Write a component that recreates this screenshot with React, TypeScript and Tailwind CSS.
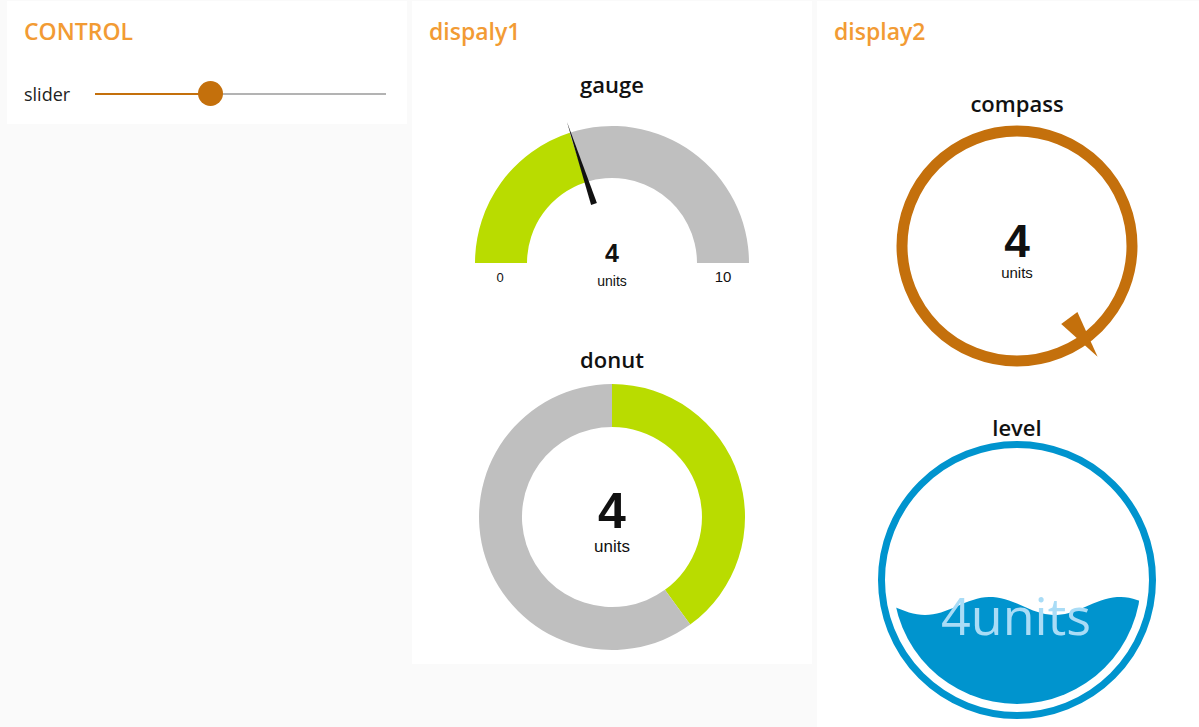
import React from "react";

const sans = "font-['Open_Sans','Noto_Sans',sans-serif]";
const arial = "font-['Liberation_Sans',Arial,sans-serif]";

// wave top edge for the level widget, svg coords
const wavePath = (() => {
  let d = "";
  for (let x = 60; x <= 340; x += 4) {
    const y = 168 - 9 * Math.sin((2 * Math.PI * (x + 817 - 827.5)) / 130);
    d += `${x === 60 ? "M" : "L"} ${x} ${y.toFixed(1)} `;
  }
  return d + "L 340 300 L 60 300 Z";
})();

const Card = ({ title, className, children }: { title: string; className: string; children?: React.ReactNode }) => (
  <div className={`w-[400px] shrink-0 bg-white ${className}`}>
    <div className={`pl-[17px] pt-[14px] text-[23px] leading-[32px] font-semibold text-[#f29b34] ${sans}`}>{title}</div>
    {children}
  </div>
);

const WidgetTitle = ({ children, className }: { children: React.ReactNode; className: string }) => (
  <div className={`text-center text-[22px] leading-[30px] font-semibold text-[#111] ${sans} ${className}`}>{children}</div>
);

const Gauge = () => (
  <svg width={400} height={200} className="block">
    <path d="M 63 164 A 137 137 0 0 1 157.7 33.7 L 173.7 83.2 A 85 85 0 0 0 115 164 Z" fill="#b9dc00" />
    <path d="M 157.7 33.7 A 137 137 0 0 1 337 164 L 285 164 A 85 85 0 0 0 173.7 83.2 Z" fill="#bfbfbf" />
    <polygon points="155,23 184.9,104.1 179.1,105.9" fill="#111" />
    <g className={arial} fill="#111" textAnchor="middle">
      <text x={88} y={183} fontSize={13}>0</text>
      <text x={311} y={183} fontSize={15}>10</text>
      <text x={200} y={163} fontSize={25} fontWeight={700}>4</text>
      <text x={200} y={187} fontSize={14}>units</text>
    </g>
  </svg>
);

const Donut = () => (
  <svg width={400} height={280} className="block">
    <path d="M 200 10 A 133 133 0 0 1 278.2 250.6 L 252.9 215.8 A 90 90 0 0 0 200 53 Z" fill="#b9dc00" />
    <path d="M 278.2 250.6 A 133 133 0 1 1 200 10 L 200 53 A 90 90 0 1 0 252.9 215.8 Z" fill="#bfbfbf" />
    <g className={arial} fill="#111" textAnchor="middle">
      <text x={200} y={154} fontSize={50} fontWeight={700}>4</text>
      <text x={200} y={178} fontSize={17}>units</text>
    </g>
  </svg>
);

const Compass = () => (
  <svg width={400} height={260} className="block">
    <circle cx={200} cy={128} r={115} fill="none" stroke="#c4700c" strokeWidth={11} />
    <polygon points="260.4,194.1 244.2,205.9 280.6,238.8" fill="#c4700c" />
    <g className={arial} fill="#111" textAnchor="middle">
      <text x={200} y={139} fontSize={46} fontWeight={700}>4</text>
      <text x={200} y={160} fontSize={15}>units</text>
    </g>
  </svg>
);

const Level = () => (
  <svg width={400} height={290} className="block">
    <defs>
      <clipPath id="levelClip">
        <circle cx={200} cy={142} r={124} />
      </clipPath>
    </defs>
    <circle cx={200} cy={142} r={135.5} fill="none" stroke="#0094ce" strokeWidth={7} />
    <path d={wavePath} fill="#0094ce" clipPath="url(#levelClip)" />
    <text x={199} y={197} fontSize={52} textAnchor="middle" fill="#a9dcf6" className={sans}>
      4units
    </text>
  </svg>
);

export default function App() {
  return (
    <div className="flex h-[727px] w-[1199px] items-start gap-[5px] overflow-hidden bg-[#fafafa] pl-[7px] pt-[1px]">
      <Card title="CONTROL" className="pb-[14px]">
        <div className="mt-[31px] flex h-[32px] items-center pl-[17px] pr-[21px]">
          <span className={`w-[71px] text-[18px] text-[#222] ${sans}`}>slider</span>
          <div className="relative h-[2px] flex-1 bg-[#b3b3b3]">
            <div className="absolute left-0 top-0 h-[2px] w-[116px] bg-[#c4700c]" />
            <div className="absolute left-[103px] top-[-12px] h-[25px] w-[25px] rounded-full bg-[#c4700c]" />
          </div>
        </div>
      </Card>

      <Card title="dispaly1" className="h-[663px]">
        <WidgetTitle className="mt-[22px]">gauge</WidgetTitle>
        <Gauge />
        <WidgetTitle className="mt-[45px]">donut</WidgetTitle>
        <Donut />
      </Card>

      <Card title="display2" className="h-[760px]">
        <WidgetTitle className="mt-[41px]">compass</WidgetTitle>
        <Compass />
        <WidgetTitle className="mt-[34px]">level</WidgetTitle>
        <div className="-mt-[4px]">
          <Level />
        </div>
      </Card>
    </div>
  );
}
